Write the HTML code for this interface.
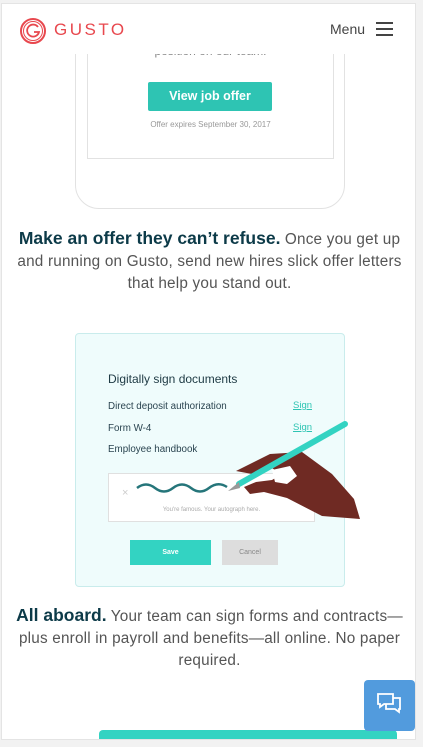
<!DOCTYPE html>
<html><head><meta charset="utf-8"><style>
*{margin:0;padding:0;box-sizing:border-box}
body{width:423px;height:747px;background:#f2f2f2;font-family:"Liberation Sans",sans-serif;position:relative;overflow:hidden}
.page{position:absolute;left:1px;top:3px;width:415px;height:737px;background:#fff;border:1px solid #e4e4e4;overflow:hidden}
.abs{position:absolute}
.hdr{position:absolute;left:0;top:0;width:415px;height:50px;background:#fff;z-index:5}
.p{position:absolute;left:0;width:415px;text-align:center;color:#555;font-size:15.3px;line-height:22px;letter-spacing:0.2px}
.p b{color:#0c3a48;font-size:17.5px;letter-spacing:0}
</style></head><body>
<div class="page">
 <div class="abs" style="left:73px;top:-40px;width:270px;height:245px;border:1px solid #e2e2e2;border-radius:0 0 24px 24px"></div>
 <div class="abs" style="left:85px;top:-40px;width:247px;height:195px;border:1px solid #e2e2e2;border-top:none"></div>
 <div class="abs" style="left:85px;top:40px;width:247px;text-align:center;font-size:12px;color:#888">position on our team.</div>
 <div class="abs" style="left:146px;top:78px;width:124px;height:29px;background:#2ec4b3;border-radius:2px;color:#fff;font-weight:bold;font-size:12.5px;text-align:center;line-height:29px">View job offer</div>
 <div class="abs" style="left:85px;top:116px;width:247px;text-align:center;font-size:8px;color:#999">Offer expires September 30, 2017</div>
 <div class="hdr">
  <svg class="abs" style="left:17px;top:13px" width="28" height="28" viewBox="0 0 28 28"><circle cx="14" cy="14" r="12" fill="none" stroke="#e8484e" stroke-width="2"/><circle cx="14" cy="14" r="9.5" fill="none" stroke="#e8484e" stroke-width="1"/><path d="M19 10a6 6 0 1 0 1 5h-5" fill="none" stroke="#e8484e" stroke-width="1.8"/></svg>
  <div class="abs" style="left:52px;top:16px;color:#e8484e;font-size:17px;letter-spacing:2.5px">GUSTO</div>
  <div class="abs" style="left:328px;top:17px;color:#444;font-size:14px">Menu</div>
  <div class="abs" style="left:374px;top:18px;width:17px;height:2px;background:#444;box-shadow:0 6px 0 #444,0 12px 0 #444"></div>
 </div>
 <div class="p" style="top:223px"><b>Make an offer they can’t refuse.</b> Once you get up<br>and running on Gusto, send new hires slick offer letters<br>that help you stand out.</div>
 <div class="abs" style="left:73px;top:329px;width:270px;height:254px;background:#effcfc;border:1px solid #c9ecec;border-radius:4px">
  <div class="abs" style="left:32px;top:38px;font-size:12px;color:#1e3a44">Digitally sign documents</div>
  <div class="abs" style="left:32px;top:67px;font-size:9.8px;color:#2a4450">Direct deposit authorization</div>
  <div class="abs" style="left:32px;top:89px;font-size:9.8px;color:#2a4450">Form W-4</div>
  <div class="abs" style="left:32px;top:110px;font-size:9.8px;color:#2a4450">Employee handbook</div>
  <div class="abs" style="left:217px;top:66px;font-size:9.5px;color:#2ec4b3;text-decoration:underline">Sign</div>
  <div class="abs" style="left:217px;top:88px;font-size:9.5px;color:#2ec4b3;text-decoration:underline">Sign</div>
  <div class="abs" style="left:32px;top:139px;width:207px;height:49px;background:#fff;border:1px solid #e0e0e0"></div>
  <div class="abs" style="left:46px;top:153px;color:#ccc;font-size:11px">×</div>
  <div class="abs" style="left:32px;top:173px;width:207px;text-align:center;font-size:6px;color:#aaa">You're famous. Your autograph here.</div>
  <div class="abs" style="left:54px;top:206px;width:81px;height:25px;background:#33d3c2;color:#fff;font-size:7px;text-align:center;line-height:25px;font-weight:bold">Save</div>
  <div class="abs" style="left:146px;top:206px;width:56px;height:25px;background:#ddd;color:#888;font-size:7px;text-align:center;line-height:25px">Cancel</div>
 </div>
 <svg class="abs" style="left:0;top:0" width="415" height="737">
  <path d="M135 484 q9 -7 18 0 t18 0 t18 0 t18 0 t18 -1" fill="none" stroke="#25757a" stroke-width="2.5"/>
  <path d="M234 467 L268 450 L300 448 L330 470 L352 495 L358 515 L320 512 L285 494 L262 488 L248 490 L242 483 L254 478 L270 476 L280 470 L268 463 L250 470 Z" fill="#6f2a23"/>
  <path d="M270 466 L288 462 L295 472 L285 480 L273 478 Z" fill="#fff"/>
  <line x1="237" y1="480" x2="343" y2="420" stroke="#33d3c2" stroke-width="6" stroke-linecap="round"/>
  <path d="M237 478 L226 487 L238 484 Z" fill="#999"/>
 </svg>
 <div class="p" style="top:600px"><b>All aboard.</b> Your team can sign forms and contracts—<br>plus enroll in payroll and benefits—all online. No paper<br>required.</div>
 <div class="abs" style="left:97px;top:726px;width:298px;height:20px;background:#33d3c2;border-radius:4px"></div>
</div>
<div class="abs" style="left:364px;top:680px;width:51px;height:51px;background:#529bdd;border-radius:4px">
 <svg width="51" height="51" viewBox="0 0 51 51"><path d="M14 14h15v10h-9l-4 3v-3h-2z" fill="none" stroke="#fff" stroke-width="1.8"/><path d="M29 18h7v11h-1v3l-4-3h-9v-5" fill="none" stroke="#fff" stroke-width="1.8"/></svg>
</div>
</body></html>
